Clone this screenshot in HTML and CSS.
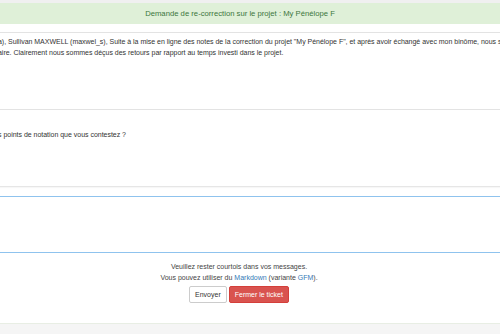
FILE: index.html
```html
<!DOCTYPE html>
<html lang="fr">
<head>
<meta charset="UTF-8">
<meta name="viewport" content="width=device-width, initial-scale=1.0">
<title>Ticket - My Pénélope F</title>
<link rel="stylesheet" href="styles.css">
</head>
<body>
<div class="topbar"></div>
<div class="alert">Demande de re-correction sur le projet : My Pénélope F</div>

<div class="message">
    <p class="line">a), Sullivan MAXWELL (maxwel_s), Suite à la mise en ligne des notes de la correction du projet "My Pénélope F", et après avoir échangé avec mon binôme, nous sommes</p>
    <p class="line">aire. Clairement nous sommes déçus des retours par rapport au temps investi dans le projet.</p>
</div>

<div class="question">
    <p class="line">s points de notation que vous contestez ?</p>
</div>

<form class="reply">
    <textarea class="reply-input"></textarea>
    <p class="hint">Veuillez rester courtois dans vos messages.</p>
    <p class="hint">Vous pouvez utiliser du <a href="#">Markdown</a> (variante <a href="#">GFM</a>).</p>
    <div class="actions">
        <button type="button" class="btn">Envoyer</button>
        <button type="button" class="btn btn-danger">Fermer le ticket</button>
    </div>
</form>

<div class="footer"></div>
</body>
</html>
```

FILE: styles.css
```css
/* Basic styling */
body {
    font-family: "Liberation Sans", Arial, sans-serif;
    font-size: 7px;
    color: #333;
    margin: 0;
    padding: 0;
    background-color: #fff;
    overflow: hidden;
}
p {
    margin: 0;
}
.topbar {
    height: 3px;
    background-color: #f0f0f0;
}
.alert {
    height: 21px;
    line-height: 21px;
    font-size: 7.7px;
    text-align: center;
    padding-right: 20px;
    background-color: #dff0d8;
    color: #3c763d;
    margin-bottom: 8px;
}
.line {
    line-height: 11px;
    white-space: nowrap;
    margin-left: -2px;
    letter-spacing: -0.02px;
}
.message {
    border-top: 1px solid #e3e3e3;
    border-bottom: 1px solid #e3e3e3;
    padding: 3px 0 51px;
}
.question {
    border-bottom: 1px solid #e6e6e6;
    box-shadow: 0 1px 1px rgba(0, 0, 0, 0.03);
    padding: 19px 0 46px;
}
.reply {
    margin-top: 9px;
    text-align: center;
    padding-right: 22px;
}
.reply-input {
    display: block;
    box-sizing: border-box;
    width: 540px;
    height: 57px;
    margin: 0 -20px;
    border: 1px solid #8fc3ee;
    resize: none;
    outline: none;
}
.hint {
    line-height: 11px;
    color: #444;
}
.reply-input + .hint {
    margin-top: 8px;
}
.hint a {
    color: #337ab7;
    text-decoration: none;
}
.actions {
    margin-top: 3px;
    display: flex;
    justify-content: center;
    gap: 2px;
}
.btn {
    font-family: inherit;
    font-size: 7px;
    height: 17px;
    padding: 0 5px;
    border: 1px solid #ccc;
    border-radius: 2px;
    background-color: #fff;
    color: #333;
}
.btn-danger {
    background-color: #d9534f;
    border-color: #d43f3a;
    color: #fff;
}
.footer {
    margin-top: 20px;
    height: 20px;
    background-color: #f5f5f5;
    border-top: 1px solid #e8eee4;
}
```
